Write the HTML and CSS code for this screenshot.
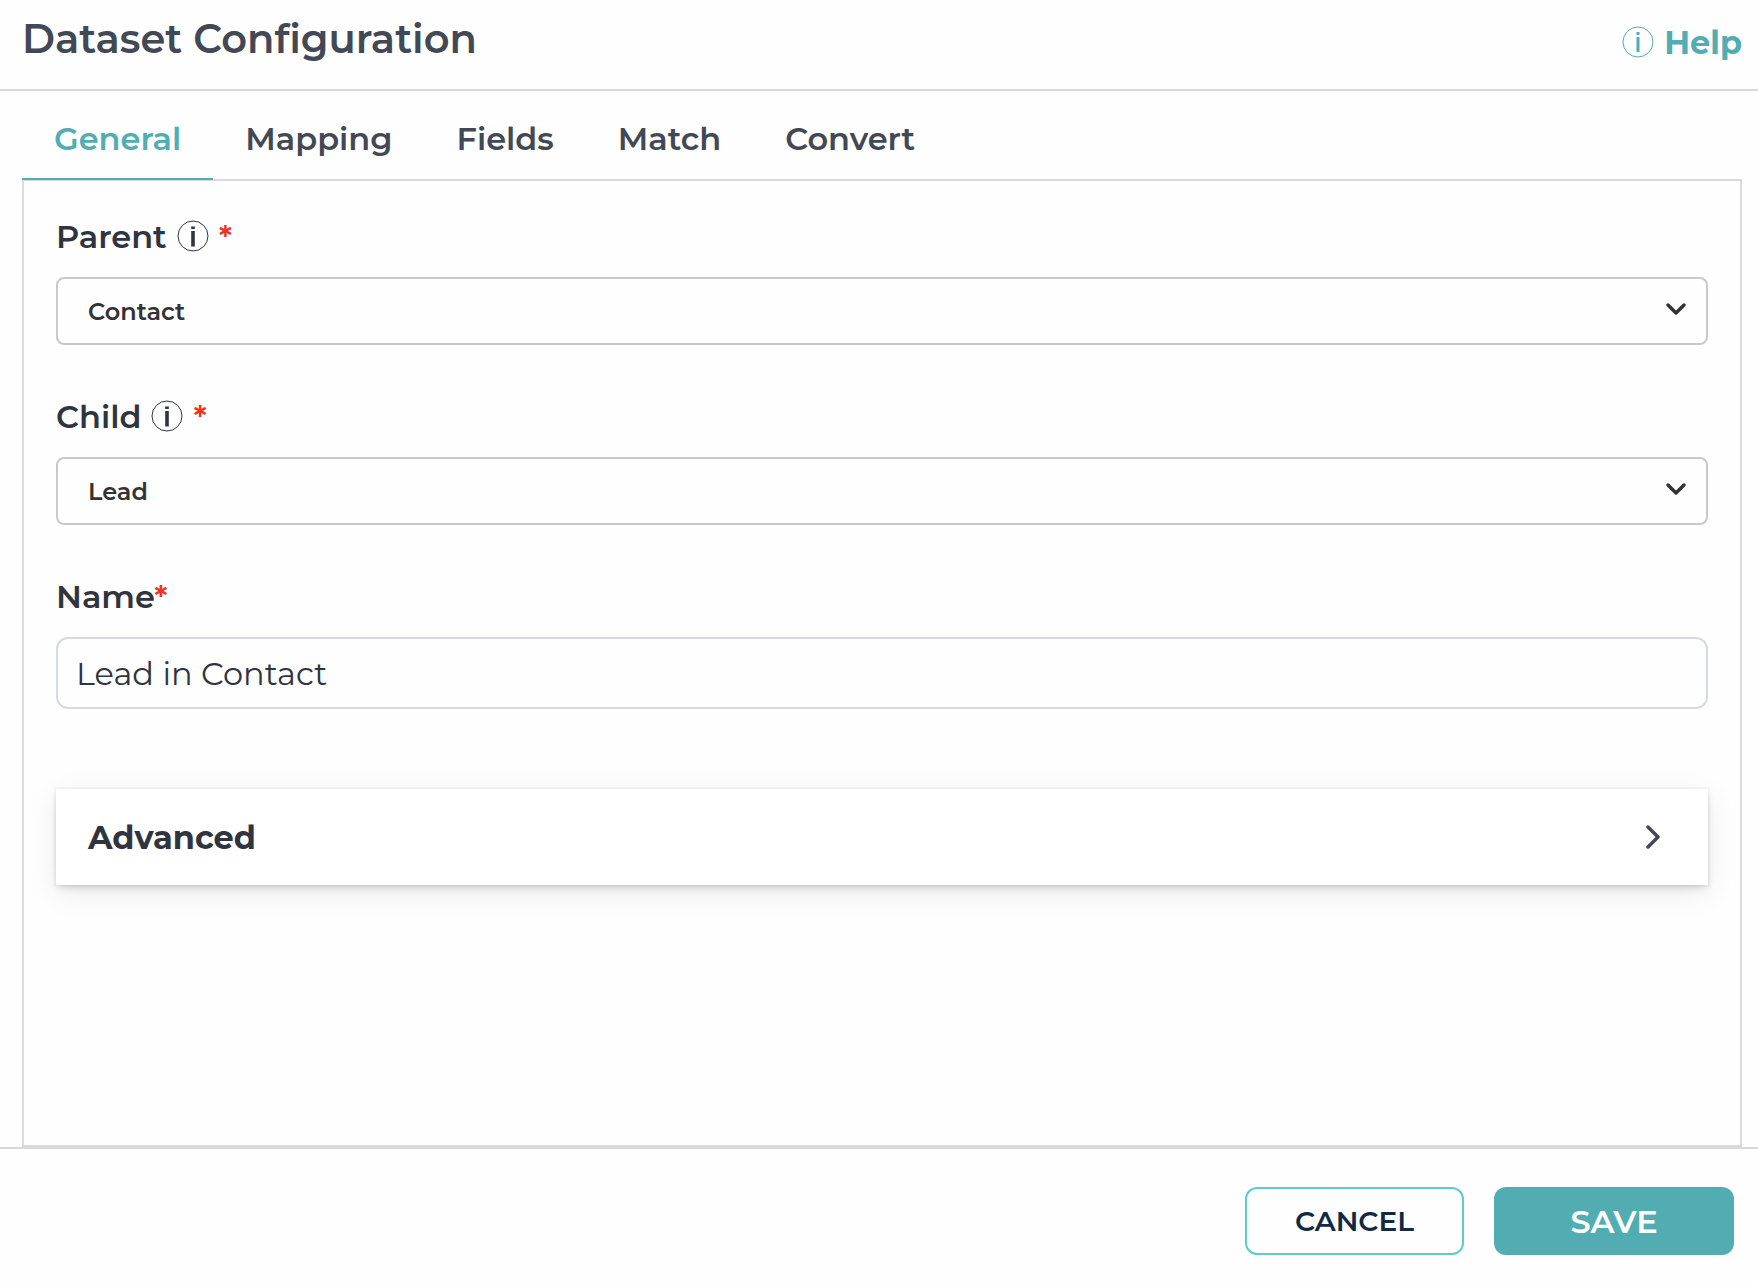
FILE: index.html
```html
<!DOCTYPE html>
<html lang="en">
<head>
    <meta charset="UTF-8">
    <meta name="viewport" content="width=device-width, initial-scale=1.0">
    <title>Dataset Configuration</title>
    <link rel="stylesheet" href="styles.css">
</head>
<body>

<header class="page-header">
    <h1>Dataset Configuration</h1>
    <a class="help-link" href="#help">
        <svg class="info-icon" viewBox="0 0 32 32" aria-hidden="true">
            <circle cx="16" cy="15" r="15"/>
            <path d="M14.5 5h3v3h-3zM14.5 10h3v15h-3z"/>
        </svg>
        Help
    </a>
</header>

<main class="content">
    <nav class="tabs">
        <a class="tab active" href="#general">General</a>
        <a class="tab" href="#mapping">Mapping</a>
        <a class="tab" href="#fields">Fields</a>
        <a class="tab" href="#match">Match</a>
        <a class="tab" href="#convert">Convert</a>
    </nav>

    <form class="panel" id="dataset-form">
        <div class="field">
            <label for="parent">
                Parent
                <svg class="info-icon" viewBox="0 0 32 32" aria-hidden="true">
                    <circle cx="16" cy="15" r="15"/>
                    <path d="M14.2 5.5h3.6v2.6h-3.6zM14.2 10h3.6v15.5h-3.6z"/>
                </svg>
                <span class="required">*</span>
            </label>
            <div class="select-wrap">
                <select id="parent">
                    <option>Contact</option>
                </select>
                <svg class="chevron" viewBox="0 0 20 12" aria-hidden="true"><path d="M2 2l8 8 8-8"/></svg>
            </div>
        </div>

        <div class="field">
            <label for="child">
                Child
                <svg class="info-icon" viewBox="0 0 32 32" aria-hidden="true">
                    <circle cx="16" cy="15" r="15"/>
                    <path d="M14.2 5.5h3.6v2.6h-3.6zM14.2 10h3.6v15.5h-3.6z"/>
                </svg>
                <span class="required">*</span>
            </label>
            <div class="select-wrap">
                <select id="child">
                    <option>Lead</option>
                </select>
                <svg class="chevron" viewBox="0 0 20 12" aria-hidden="true"><path d="M2 2l8 8 8-8"/></svg>
            </div>
        </div>

        <div class="field">
            <label for="name"><span>Name<span class="required">*</span></span></label>
            <input type="text" id="name" value="Lead in Contact">
        </div>

        <button type="button" class="accordion">
            Advanced
            <svg class="arrow" viewBox="0 0 14 24" aria-hidden="true"><path d="M2 2l10 10L2 22"/></svg>
        </button>
    </form>
</main>

<footer class="page-footer">
    <button type="button" class="btn btn-cancel">CANCEL</button>
    <button type="submit" form="dataset-form" class="btn btn-save">SAVE</button>
</footer>

</body>
</html>
```

FILE: styles.css
```css
* { box-sizing: border-box; }
body { margin: 0; min-height: 100vh; display: flex; flex-direction: column; background-color: #fefefe; color: #2f343f; font-family: Montserrat, Inter, sans-serif; font-size: 32px; font-weight: 600; line-height: 40px; }
button, input, select { font-family: inherit; color: inherit; }

/* Header */
.page-header { display: flex; justify-content: space-between; align-items: flex-end; padding: 15px 16px 26px 22px; border-bottom: 2px solid #d8dae2; }
h1 { margin: 0; font-size: 40px; font-weight: 600; line-height: 48px; color: #424854; }
.help-link { display: flex; align-items: center; gap: 10px; color: #52adb2; font-weight: 700; text-decoration: none; }
.info-icon { width: 32px; height: 32px; overflow: visible; }
.info-icon circle { fill: none; stroke: currentColor; stroke-width: 1; }
.info-icon path { fill: currentColor; }

/* Tabs */
.content { flex: 1; display: flex; flex-direction: column; padding: 0 16px 0 22px; }
.tabs { display: flex; position: relative; padding-top: 18px; margin-bottom: -1px; }
.tab { padding: 10px 32px 19px; border-bottom: 2px solid transparent; color: #424854; text-decoration: none; }
.tab.active { color: #52adb2; border-bottom-color: #52adb2; }

/* Form */
.panel { flex: 1; padding: 36px 32px; border: 2px solid #d9dbdf; border-top-color: #d6dae1; }
.field { margin-bottom: 52px; }
.field label { display: flex; align-items: center; gap: 10px; margin-bottom: 20px; }
.required { color: #ee3224; }
.select-wrap { position: relative; }
select { display: block; width: 100%; height: 68px; padding: 0 60px 0 30px; border: 2px solid #c9c9c9; border-radius: 8px; background-color: #fefefe; color: #333; font-size: 24px; font-weight: 600; appearance: none; }
.chevron { position: absolute; right: 22px; top: 26px; width: 20px; height: 12px; overflow: visible; pointer-events: none; }
.chevron path, .arrow path { fill: none; stroke: #333; stroke-width: 3.5; stroke-linecap: round; stroke-linejoin: round; }
input { display: block; width: 100%; height: 72px; padding: 0 18px; border: 2px solid #d6dae1; border-radius: 12px; background-color: #fefefe; font-size: 32px; font-weight: 400; }

.accordion { display: flex; justify-content: space-between; align-items: center; width: 100%; height: 96px; margin-top: 80px; padding: 0 48px 0 32px; border: none; background-color: #fff; font-size: 32px; font-weight: 700; box-shadow: 0 0 0 2px rgba(0,0,0,0.03), 0 4px 8px -2px rgba(0,0,0,0.16), 0 8px 28px rgba(0,0,0,0.08); }
.arrow { width: 14px; height: 24px; }
.arrow path { stroke: #424854; }

/* Footer */
.page-footer { display: flex; justify-content: flex-end; gap: 30px; padding: 38px 24px 27px; border-top: 2px solid #d6d9dc; }
.btn { height: 68px; border-radius: 12px; }
.btn-cancel { width: 219px; border: 2px solid #5ecbce; background-color: #fefefe; color: #102a43; font-size: 28px; font-weight: 600; }
.btn-save { width: 240px; border: none; background-color: #52adb2; color: #fff; font-size: 32px; font-weight: 600; }
```
